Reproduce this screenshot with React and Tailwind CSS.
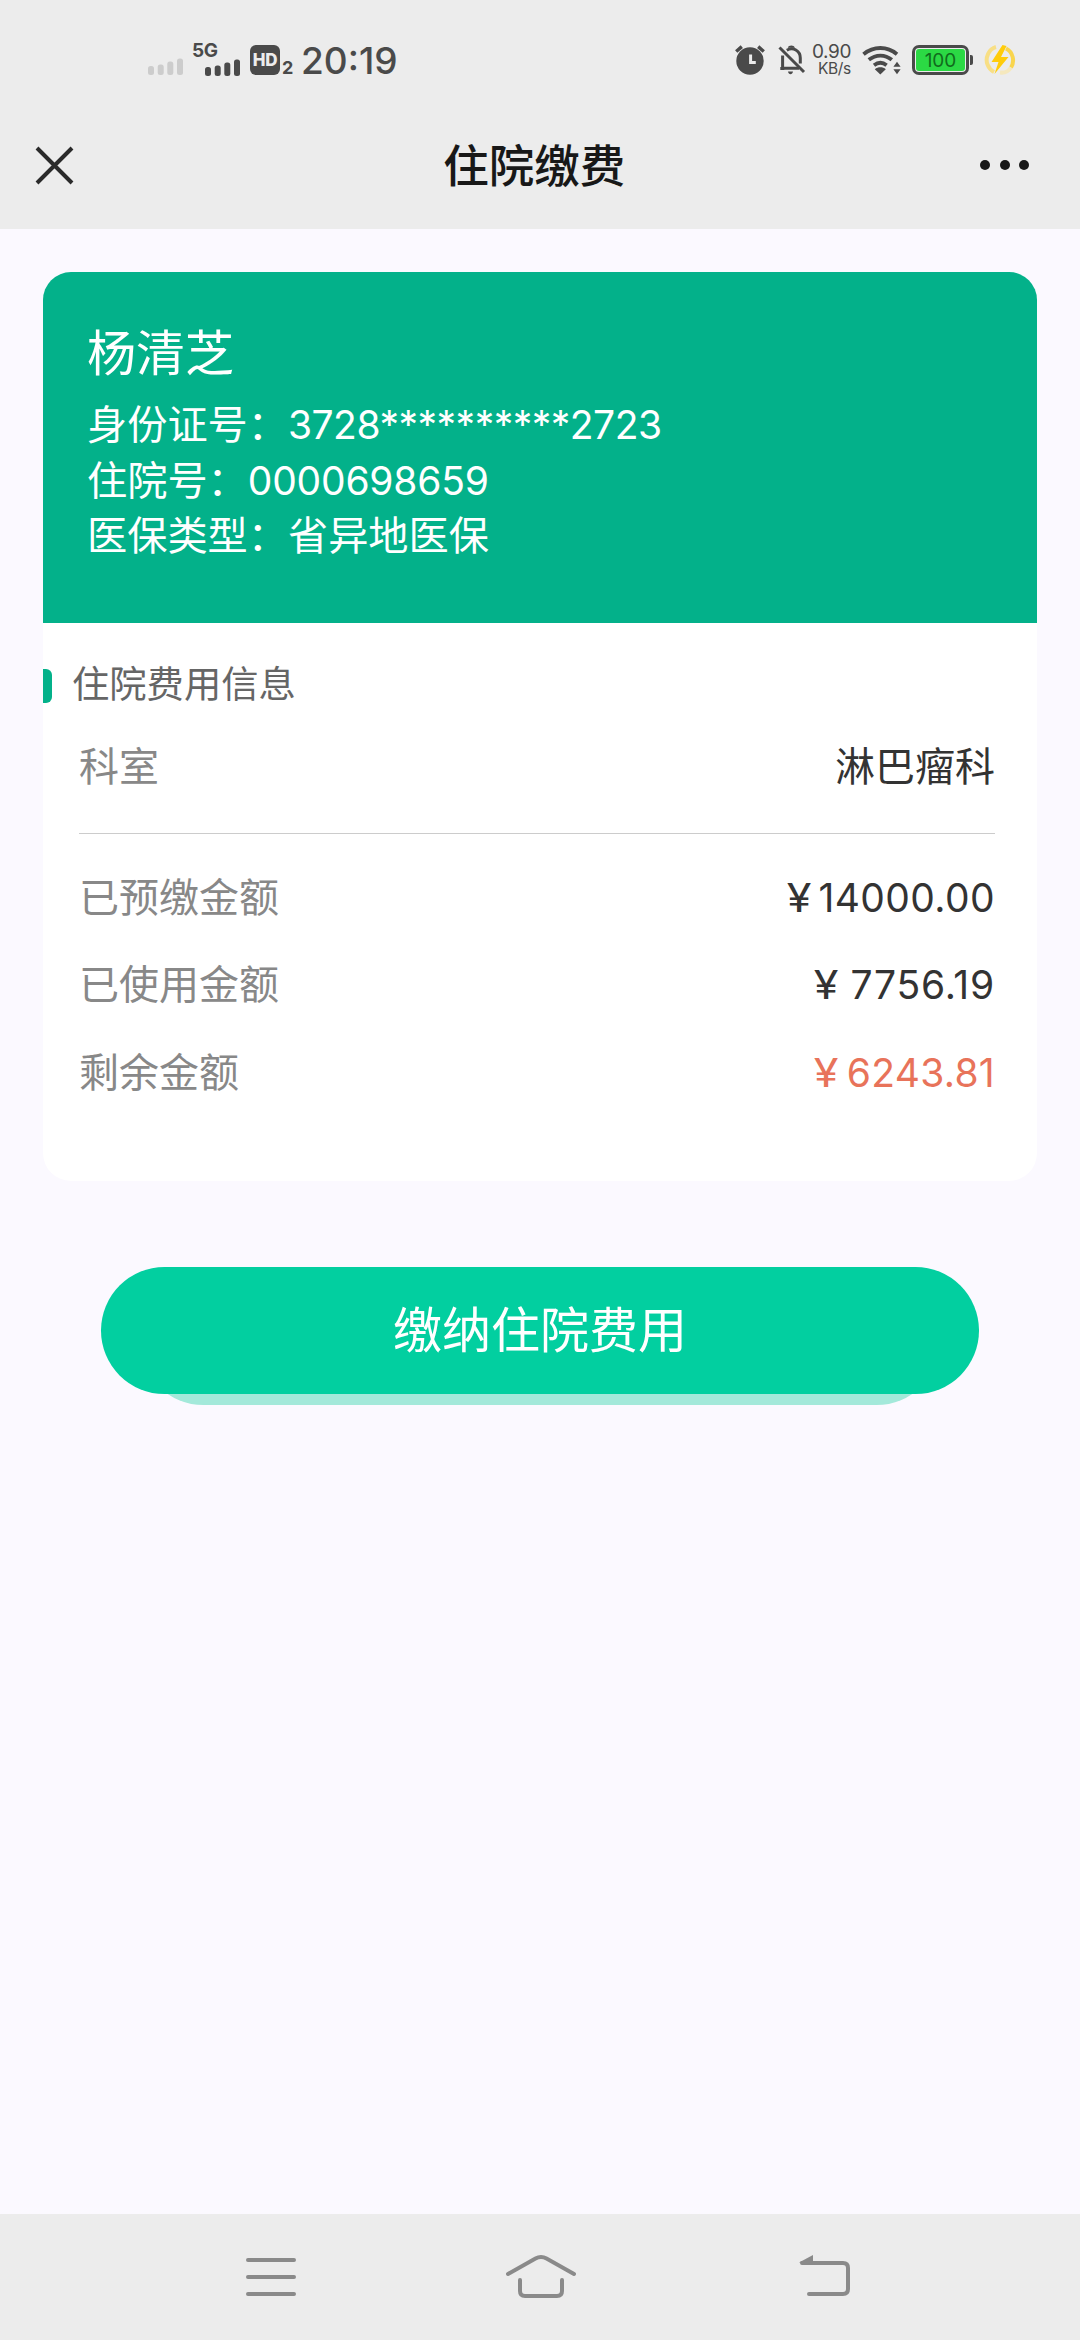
const PATIENT = {
  name: '杨清芝',
  idCard: '3728**********2723',
  hospitalNo: '0000698659',
  insurance: '省异地医保',
};

const FEES = [
  { key: 'prepaid', label: '已预缴金额', value: '14000.00', color: 'text-[#333333]', spacing: 'gap-[7px] tracking-[0.4px]' },
  { key: 'used',    label: '已使用金额', value: '7756.19',  color: 'text-[#333333]', spacing: 'gap-[11px] tracking-[0.8px]' },
  { key: 'left',    label: '剩余金额',   value: '6243.81',  color: 'text-[#e8735a]', spacing: 'gap-[8px] tracking-[0.3px]' },
];

function SignalBars({ className }) {
  return (
    <svg width="36" height="17" viewBox="0 0 36 17" fill="currentColor" className={className}>
      <rect x="0" y="8" width="6" height="9" rx="2.5" />
      <rect x="9.7" y="6.5" width="6" height="10.5" rx="2.5" />
      <rect x="19.3" y="3.5" width="6" height="13.5" rx="2.5" />
      <rect x="29" y="0.5" width="6" height="16.5" rx="2.5" />
    </svg>
  );
}

function AlarmIcon() {
  return (
    <svg width="30" height="30" viewBox="0 0 30 30" fill="none">
      <circle cx="15" cy="16" r="13.7" fill="#4a4a4a" />
      <path d="M1.2 6.5 6.8 1.6M28.8 6.5 23.2 1.6" stroke="#4a4a4a" strokeWidth="3.4" />
      <path d="M15.6 9.5v8h5.2" stroke="#ececec" strokeWidth="3" />
    </svg>
  );
}

function BellOffIcon() {
  return (
    <svg width="28" height="30" viewBox="0 0 28 30" fill="none" stroke="#4a4a4a" strokeWidth="3">
      <path d="M1.5 2.5 26 27" />
      <path d="M4.6 10.5V23.3H21M2.3 23.4h4" />
      <path d="M8.8 5.2C15 1.6 22.3 5.5 22.3 13v5.5" />
      <path d="M9.8 2.8c.6-3 6.4-3 7 0zM10 26.5h5c-.6 3.6-4.4 3.6-5 0z" fill="#4a4a4a" stroke="none" />
    </svg>
  );
}

function WifiIcon() {
  return (
    <svg width="40" height="30" viewBox="0 0 40 30" fill="none" stroke="#4a4a4a" strokeWidth="3.8">
      <path d="M1.5 9.2c10-8.3 23.8-8.3 33.5 0" />
      <path d="M6.8 14.8c7-5.7 16.3-5.7 23 0" />
      <path d="M12 20.2c4-3 8.8-3 12.6 0" />
      <path d="M12.8 24.2c3.2-2.5 8-2.5 11 0l-5.5 5.3z" fill="#4a4a4a" stroke="none" />
      <path d="m35 16.8 3.6 5h-7.2zM35 29.2l3.6-5h-7.2z" fill="#4a4a4a" stroke="none" />
    </svg>
  );
}

function ChargeIcon() {
  return (
    <svg width="32" height="32" viewBox="0 0 32 32" fill="none">
      <path d="M12 3C4.500 5 1 14 3.500 20.500c1.200 3 3.500 6 6.500 7.500" stroke="#f8df85" strokeWidth="4" />
      <path d="M22 4.500C29 8 31 17 27 23.500" stroke="#f9d54d" strokeWidth="4" />
      <path d="M27 23.500c-2.500 4-7 5.500-11 5" stroke="#f5e8bd" strokeWidth="4" />
      <path d="M18.500 1 7.500 18h7l-4 12L24.500 13H17l5.500-11z" fill="#ffcc0a" />
    </svg>
  );
}

function StatusBar() {
  return (
    <div className="flex h-[120px] items-center pl-[148px] pr-[64px] text-[#4a4a4a]">
      <SignalBars className="mt-3 text-[#cccccc]" />
      <div className="ml-2 flex w-[49px] flex-col">
        <span className="h-[14px] text-[19px] font-bold leading-[14px] tracking-[-0.5px]">5G</span>
        <SignalBars className="ml-[13px] mt-px" />
      </div>
      <div className="ml-[9px] flex h-[30px] w-[30px] items-center justify-center rounded-[6px] bg-[#4a4a4a] text-[17px] font-extrabold leading-none tracking-[-0.3px] text-[#ececec]">
        HD
      </div>
      <span className="ml-[2px] mt-4 w-[12px] text-[18px] font-bold leading-none">2</span>
      <span className="ml-[7px] text-[37px] font-medium leading-none">20:19</span>

      <div className="ml-auto flex items-center">
        <AlarmIcon />
        <div className="ml-[13px] flex"><BellOffIcon /></div>
        <div className="ml-[7px] flex w-[38px] flex-col items-end leading-none">
          <span className="text-[19px] leading-[17px] tracking-[-0.4px]">0.90</span>
          <span className="text-[15.500px] leading-[17px] tracking-[-0.3px]">KB/s</span>
        </div>
        <div className="ml-[11px] flex"><WifiIcon /></div>
        <div className="ml-[10px] flex h-[30px] w-[57px] rounded-[7px] border-[3px] border-[#4a4a4a] bg-[#ececec] p-px">
          <div className="flex flex-1 items-center justify-center rounded-[3px] bg-[#2bd944] text-[19px] leading-none text-[#116b1d]">
            100
          </div>
        </div>
        <div className="ml-px h-[10px] w-[3px] rounded-r-[2px] bg-[#4a4a4a]" />
        <div className="ml-[11px] flex"><ChargeIcon /></div>
      </div>
    </div>
  );
}

function TitleBar() {
  return (
    <div className="flex h-[109px] items-start justify-between pl-[34px] pr-[51px]">
      <div className="flex h-[89px] w-[54px] items-center">
        <svg width="40" height="40" viewBox="0 0 40 40" stroke="#2a2a2a" strokeWidth="4">
          <path d="M3 3 38 38M38 3 3 38" />
        </svg>
      </div>
      <h1 className="h-[92px] text-[45.500px] font-medium leading-[94px] text-[#181818]">住院缴费</h1>
      <div className="flex h-[89px] w-[48.500px] items-center justify-between">
        <span className="h-[10px] w-[10px] rounded-full bg-[#181818]" />
        <span className="h-[10px] w-[10px] rounded-full bg-[#181818]" />
        <span className="h-[10px] w-[10px] rounded-full bg-[#181818]" />
      </div>
    </div>
  );
}

function NavBar() {
  return (
    <div className="flex h-[126px] justify-between bg-[#ececec] pl-[244px] pr-[228px] pt-[39px]">
      <svg width="54" height="48" viewBox="0 0 54 48" fill="none" stroke="#8a8a8a" strokeWidth="4" strokeLinecap="round">
        <path d="M4 7h46M4 24h46M4 41h46" />
      </svg>
      <svg width="74" height="48" viewBox="0 0 74 48" fill="none" stroke="#8a8a8a" strokeWidth="4" strokeLinecap="round" className="mr-[12px]">
        <path d="M4 21 31.500 5.500Q37 2.500 42.500 5.500L70 21" />
        <path d="M16 27v11q0 5 5 5h32q5 0 5-5V27" />
      </svg>
      <svg width="56" height="48" viewBox="0 0 56 48" fill="none" stroke="#8a8a8a" strokeWidth="4" strokeLinecap="round">
        <path d="M6 10h41q5 0 5 5v21q0 5-5 5H13" />
        <path d="M3 9.500 17 2v9z" fill="#8a8a8a" stroke="none" />
      </svg>
    </div>
  );
}

export default function App() {
  return (
    <div className="flex h-[2340px] w-[1080px] flex-col overflow-hidden bg-[#fbf9ff] font-['Inter','Noto_Sans_CJK_SC',sans-serif]">
      <header className="bg-[#ececec]">
        <StatusBar />
        <TitleBar />
      </header>

      <main className="flex flex-1 flex-col">
        <section className="mx-[43px] mt-[43px] h-[909px] overflow-hidden rounded-[28px] bg-white">
          {/* Patient */}
          <div className="h-[351px] bg-[#03b18a] pl-[44px] pt-[47px] text-[40.200px] leading-[55.500px] text-white">
            <p className="mb-[8px] text-[49px] leading-[70px]">{PATIENT.name}</p>
            <p>身份证号：<span className="text-[39px] tracking-[-0.5px]">{PATIENT.idCard}</span></p>
            <p>住院号：<span className="text-[39px] tracking-[-0.2px]">{PATIENT.hospitalNo}</span></p>
            <p>医保类型：{PATIENT.insurance}</p>
          </div>

          {/* Fees */}
          <div className="flex h-[124px] items-center gap-[20px]">
            <span className="mt-px h-[34px] w-[9px] rounded-r-[6px] bg-[#03b18a]" />
            <h2 className="text-[37.300px] leading-none text-[#666666]">住院费用信息</h2>
          </div>
          <div className="pl-[36px] pr-[42px] text-[40px]">
            <div className="flex h-[87px] items-start justify-between border-b border-[#cccccc] leading-[40px]">
              <span className="text-[#888888]">科室</span>
              <span className="text-[#333333]">淋巴瘤科</span>
            </div>
            <div className="pt-[20px]">
              {FEES.map(({ key, label, value, color, spacing }) => (
                <div key={key} className="flex h-[87.500px] items-center justify-between">
                  <span className="text-[#888888]">{label}</span>
                  <span className={`flex items-center text-[39px] ${color} ${spacing}`}>
                    <span className="origin-right scale-x-115">¥</span>
                    <span>{value}</span>
                  </span>
                </div>
              ))}
            </div>
          </div>
        </section>

        <div className="relative mx-[101px] mt-[86px] h-[127px]">
          <div className="absolute inset-x-[39px] top-[11px] h-[127px] rounded-full bg-[#a3e9da]" />
          <button className="relative h-full w-full rounded-full bg-[#02cfa0] text-[49px] leading-none text-white">
            缴纳住院费用
          </button>
        </div>
      </main>

      <NavBar />
    </div>
  );
}
